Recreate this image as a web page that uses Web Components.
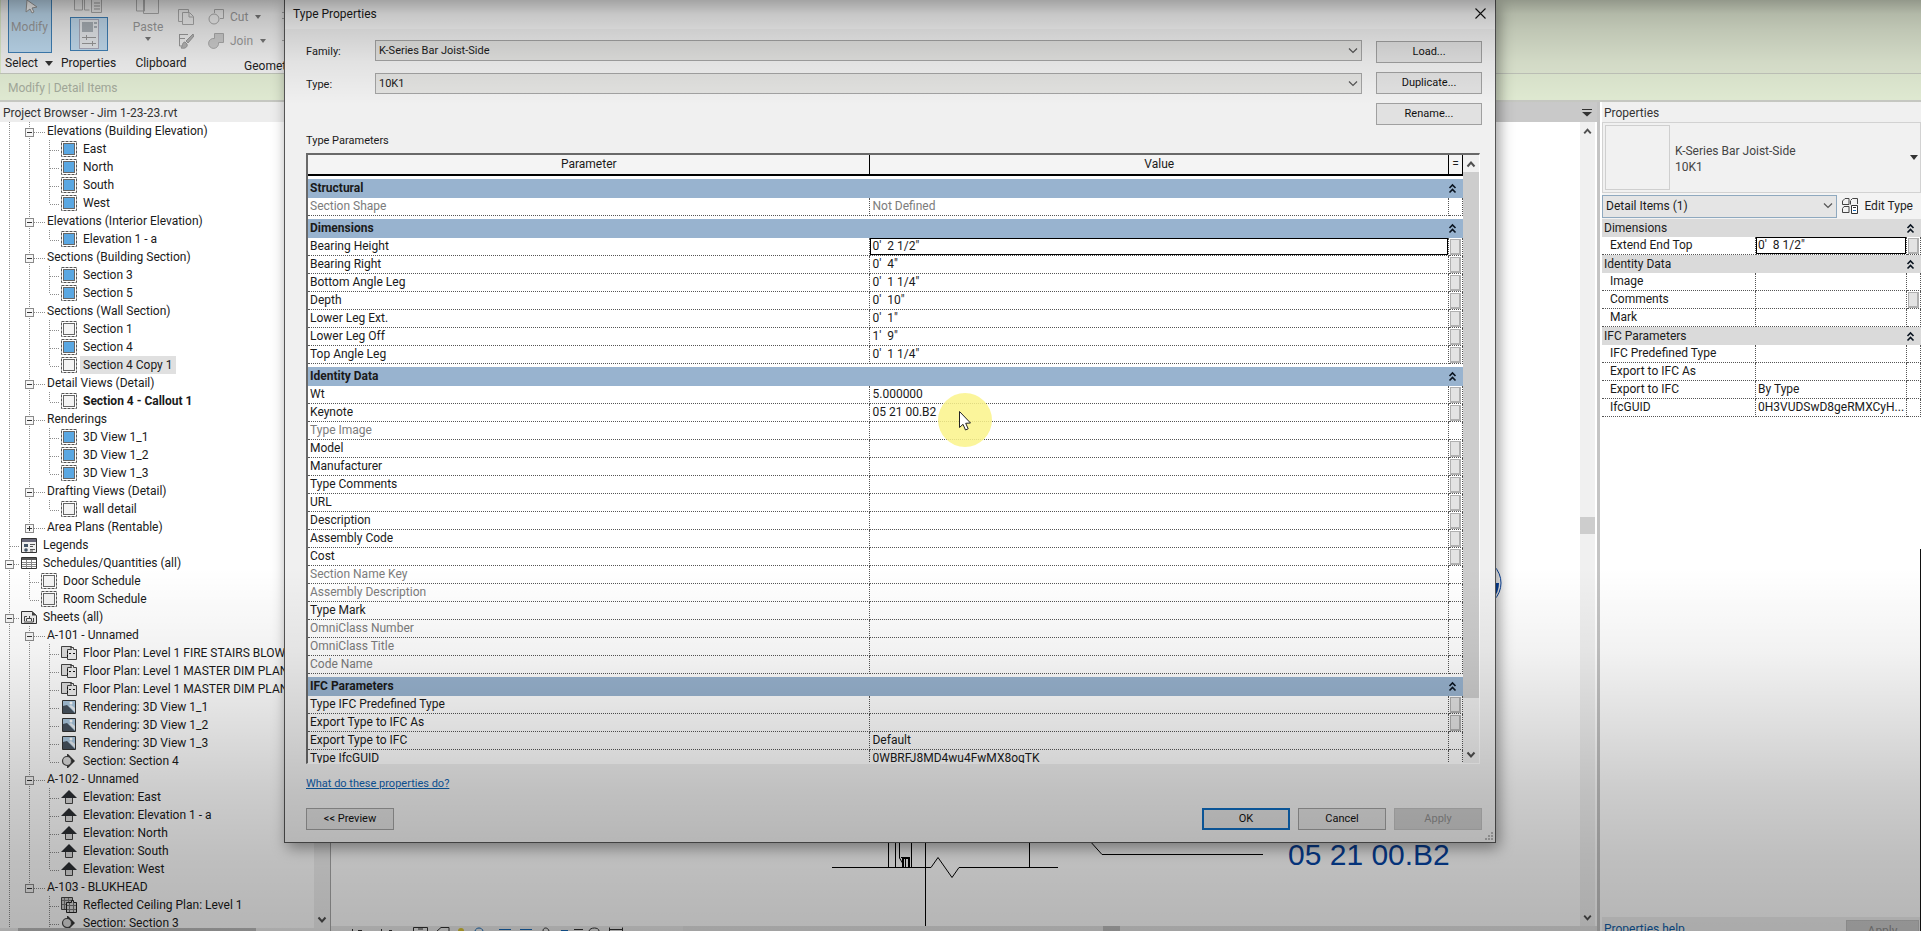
<!DOCTYPE html>
<html lang="en">
<head>
<meta charset="utf-8">
<title>Type Properties</title>
<style>
html,body{margin:0;height:100%;overflow:hidden;background:#fff}
body{font:12px/18px Roboto,"Open Sans",sans-serif;color:#1a1a1a}
</style>
</head>
<body>
<app-window></app-window>
<script>
const define = (name, html, setup) => customElements.define(name, class extends HTMLElement {
  connectedCallback() {
    if (this.shadowRoot) return;
    const t = document.createElement('template');
    t.innerHTML = typeof html === 'function' ? html(this) : html;
    this.attachShadow({mode: 'open'}).append(t.content.cloneNode(true));
    if (setup) setup(this, this.shadowRoot);
  }
});

/* ---------- scroll bar ---------- */
define('scroll-bar', el => `<style>
:host{display:flex;flex-direction:column;background:#f0f0f0;width:16px}
svg{flex:none;width:100%;height:17px;display:block}
.gap{flex:${el.getAttribute('before') || 0} 0 0}
.thumb{flex:${el.getAttribute('thumb') || 0} 0 0;background:#cdcdcd}
.rest{flex:${el.getAttribute('after') || 1} 0 0}
path{fill:none;stroke:#505050;stroke-width:2}
</style>
${el.hasAttribute('no-up') ? '' : '<svg viewBox="0 0 16 17"><path d="M4.500 11.500 8 7.500l3.500 4"/></svg>'}
<div class="gap"></div><div class="thumb"></div><div class="rest"></div>
<svg viewBox="0 0 16 17"><path d="M4.500 6.500 8 10.500l3.500-4"/></svg>`);

/* ---------- drop-down ---------- */
define('drop-down', el => `<style>
:host{display:flex;position:relative}
select{appearance:none;flex:1;min-width:0;height:100%;box-sizing:border-box;border:1px solid var(--edge,#a3a3a3);border-radius:0;background:var(--fill,#e2e2e0);padding:0 3px;margin:0;font:inherit;color:#1a1a1a;outline:0}
svg{position:absolute;right:4px;top:50%;margin-top:-4px;width:10px;height:8px;pointer-events:none}
</style><select aria-label="${el.getAttribute('label')}"><option>${el.getAttribute('value')}</option></select>
<svg viewBox="0 0 10 8"><path d="M1 1.500 5 5.500 9 1.500" fill="none" stroke="#555" stroke-width="1.200"/></svg>`);

/* ---------- push button ---------- */
define('push-button', el => `<style>
:host{display:block;width:88px;height:22px;flex:none}
button{width:100%;height:100%;box-sizing:border-box;padding:0;border:1px solid #a0a0a0;border-radius:0;background:#e1e1e1;font:inherit;color:#111}
:host([primary]) button{border:2px solid #0e6cc0}
button:disabled{background:#cdcdcd;border-color:#c0c0c0;color:#8f8f8f}
</style><button type="button"${el.hasAttribute('off') ? ' disabled' : ''}><slot></slot></button>`);

/* ---------- parameter table ---------- */
const chevrons = '<svg width="9" height="11" viewBox="0 0 9 11"><path d="M1.500 5 4.500 2l3 3M1.500 9.500l3-3 3 3" fill="none" stroke="#0a1420" stroke-width="1.600"/></svg>';
const tables = {
  type: {head: true, groups: [
    ['Structural', [['Section Shape', 'Not Defined', 'd']]],
    ['Dimensions', [['Bearing Height', `0'  2 1/2"`, 'sb'], ['Bearing Right', `0'  4"`, 'b'], ['Bottom Angle Leg', `0'  1 1/4"`, 'b'],
      ['Depth', `0'  10"`, 'b'], ['Lower Leg Ext.', `0'  1"`, 'b'], ['Lower Leg Off', `1'  9"`, 'b'], ['Top Angle Leg', `0'  1 1/4"`, 'b']]],
    ['Identity Data', [['Wt', '5.000000', 'b'], ['Keynote', '05 21 00.B2', 'b'], ['Type Image', '', 'd'], ['Model', '', 'b'], ['Manufacturer', '', 'b'],
      ['Type Comments', '', 'b'], ['URL', '', 'b'], ['Description', '', 'b'], ['Assembly Code', '', 'b'], ['Cost', '', 'b'], ['Section Name Key', '', 'd'],
      ['Assembly Description', '', 'd'], ['Type Mark', '', ''], ['OmniClass Number', '', 'd'], ['OmniClass Title', '', 'd'], ['Code Name', '', 'd']]],
    ['IFC Parameters', [['Type IFC Predefined Type', '', 'b'], ['Export Type to IFC As', '', 'b'], ['Export Type to IFC', 'Default', ''], ['Type IfcGUID', '0WBRFJ8MD4wu4FwMX8oqTK', '']]]
  ]},
  instance: {groups: [
    ['Dimensions', [['Extend End Top', `0'  8 1/2"`, 'sb']]],
    ['Identity Data', [['Image', '', ''], ['Comments', '', 'b'], ['Mark', '', '']]],
    ['IFC Parameters', [['IFC Predefined Type', '', ''], ['Export to IFC As', '', ''], ['Export to IFC', 'By Type', ''], ['IfcGUID', '0H3VUDSwD8geRMXCyH...', '']]]
  ]}
};
define('param-table', el => {
  const t = tables[el.getAttribute('data')];
  const esc = s => s.replace(/"/g, '&quot;');
  return `<style>
:host{display:block;min-width:0}
table{width:100%;border-collapse:separate;border-spacing:0;table-layout:fixed;background:#fff}
.name{width:var(--name,48.7%)}.more{width:var(--more,14px)}
thead th{height:19px;padding:0;font-weight:400;background:#f4f4f4;border-right:1px solid #000;border-bottom:2px solid #000;line-height:19px}
.group th{height:var(--group,19px);line-height:var(--group,19px);padding:0 0 0 2px;text-align:left;font-weight:var(--weight,700);background:var(--band,#98b3cf);background-clip:padding-box;border-top:var(--gap,3px) solid #fff}
.group div{display:flex;justify-content:space-between;align-items:center;padding-right:6px}
td,.row th{height:17px;line-height:17px;padding:0 0 0 2px;text-align:left;font-weight:400;border-bottom:1px dotted #555;border-right:1px dotted #555;white-space:pre;overflow:hidden}
.row th{padding-left:var(--inset,2px)}
.off th,.off td{color:#7c7c7c}
td.pick{padding:0}
input{display:block;width:100%;height:17px;box-sizing:border-box;border:1px solid #000;border-radius:0;padding:0 1px;margin:0;font:inherit;color:inherit;outline:0;background:#fff}
td.end{padding:0 0 0 1px}
td button{display:block;width:11px;height:16px;padding:0;border:1px solid #b0b0b0;border-right-width:2px;border-bottom-width:2px;border-radius:0;background:#e3e3e3}
</style><table><colgroup><col class="name"><col><col class="more"></colgroup>
${t.head ? '<thead><tr><th>Parameter</th><th>Value</th><th>=</th></tr></thead>' : ''}<tbody>
${t.groups.map(([g, rows]) => `<tr class="group"><th colspan="3"><div>${g}${chevrons}</div></th></tr>` + rows.map(([n, v, f]) =>
  `<tr class="row${f.includes('d') ? ' off' : ''}"><th scope="row">${n}</th>${f.includes('s') ? `<td class="pick"><input aria-label="${n}" value="${esc(v)}"></td>` : `<td>${v}</td>`}<td class="end">${f.includes('b') ? `<button type="button" aria-label="Associate ${n}"></button>` : ''}</td></tr>`).join('')).join('')}
</tbody></table>`;
});

/* ---------- project tree ---------- */
const icons = {
  view: f => `<rect x=".5" y=".5" width="15" height="15" fill="#fff" stroke="#555" stroke-dasharray="3 1"/><rect x="2.500" y="2.500" width="11" height="11" fill="${f}" stroke="#666"/>`,
  legend: '<path d="M.5 1.500h15v14H.5z" fill="#eee" stroke="#333"/><path d="M1 2h14v3H1z" fill="#667"/><path d="M3 7h4v3H3z" fill="#456"/><circle cx="5" cy="13" r="1.800" fill="#456"/><path d="M9 7.500h5M9 9.500h3M9 12.500h5M9 14h3" stroke="#555"/>',
  schedule: '<path d="M.5 2.500h15v11H.5z" fill="#fff" stroke="#333"/><path d="M1 3h14v2H1z" fill="#555"/><path d="M1 7.500h14M1 9.500h14M1 11.500h14M5.500 5v8M10.500 5v8" stroke="#888"/>',
  sheet: '<path d="M.5 2.500H11l4.500 4v8H.5z" fill="#eee" stroke="#333"/><path d="M11 2.500v4h4.500z" fill="#444"/><path d="M3.500 12V7.500H6M5.500 12V9.500h5V12M8.500 7v2.500M12.500 9v4H3" fill="none" stroke="#444"/>',
  floor: '<path d="M.5 1.500h10v11H.5z" fill="#ddd" stroke="#444"/><path d="M6.500 4.500h4l-1-2h3v2h3v10h-9z" fill="#eee" stroke="#444"/><path d="M6.500 6v2m0 2v2M8 8.500h2m2 0h2" stroke="#111"/>',
  render: '<path d="M1.500 1.500h13v13h-13z" fill="#a9c6de" stroke="#333"/><path d="M2 7l4-1 8 8H2z" fill="#46525f"/><path d="M8 7l6 6V9L10 6z" fill="#e8edf2"/><circle cx="10" cy="4" r="1.500" fill="#fff"/>',
  section: '<path d="M7 1l7 7-7 7z" fill="#333"/><circle cx="6" cy="8" r="4.500" fill="#ddd" stroke="#444" stroke-width="1.200"/><path d="M6.500 1v3M6.500 12v3" stroke="#444"/>',
  elevation: '<path d="M4.500 8h7v6.500h-7z" fill="#ddd" stroke="#444"/><path d="M8 1 0 9h16z" fill="#2c2f33"/>',
  ceiling: '<path d="M.5.5h11v12H.5z" fill="#ccc" stroke="#444"/><path d="M3.500 1v11M7.500 1v11M1 3.500h10M1 7.500h10" stroke="#777"/><path d="M5.500 5.500h5V3.500h2v2h3v10h-10z" fill="#ddd" stroke="#222"/><path d="M8.500 6v9M12.500 6v9M6 8.500h9M6 12.500h9" stroke="#777"/>'
};
icons.blue = icons.view('#5aa7e2'); icons.blank = icons.view('#f4f4f4');
/* guides: | line, T branch, L last branch, B open box, P closed last box, E last open box */
const rows = [
  ['|B', '', 'Elevations (Building Elevation)'], ['||T', 'blue', 'East'], ['||T', 'blue', 'North'], ['||T', 'blue', 'South'], ['||L', 'blue', 'West'],
  ['|B', '', 'Elevations (Interior Elevation)'], ['||L', 'blue', 'Elevation 1 - a'],
  ['|B', '', 'Sections (Building Section)'], ['||T', 'blue', 'Section 3'], ['||L', 'blue', 'Section 5'],
  ['|B', '', 'Sections (Wall Section)'], ['||T', 'blank', 'Section 1'], ['||T', 'blue', 'Section 4'], ['||L', 'blank', 'Section 4 Copy 1', 'picked'],
  ['|B', '', 'Detail Views (Detail)'], ['||L', 'blank', 'Section 4 - Callout 1', 'open'],
  ['|B', '', 'Renderings'], ['||T', 'blue', '3D View 1_1'], ['||T', 'blue', '3D View 1_2'], ['||L', 'blue', '3D View 1_3'],
  ['|B', '', 'Drafting Views (Detail)'], ['||L', 'blank', 'wall detail'], ['|P', '', 'Area Plans (Rentable)'],
  ['T', 'legend', 'Legends'], ['B', 'schedule', 'Schedules/Quantities (all)'], ['|T', 'blank', 'Door Schedule'], ['|L', 'blank', 'Room Schedule'],
  ['B', 'sheet', 'Sheets (all)'], ['|B', '', 'A-101 - Unnamed'],
  ['||T', 'floor', 'Floor Plan: Level 1 FIRE STAIRS BLOWUP'], ['||T', 'floor', 'Floor Plan: Level 1 MASTER DIM PLAN'], ['||T', 'floor', 'Floor Plan: Level 1 MASTER DIM PLAN'],
  ['||T', 'render', 'Rendering: 3D View 1_1'], ['||T', 'render', 'Rendering: 3D View 1_2'], ['||T', 'render', 'Rendering: 3D View 1_3'], ['||L', 'section', 'Section: Section 4'],
  ['|B', '', 'A-102 - Unnamed'], ['||T', 'elevation', 'Elevation: East'], ['||T', 'elevation', 'Elevation: Elevation 1 - a'], ['||T', 'elevation', 'Elevation: North'],
  ['||T', 'elevation', 'Elevation: South'], ['||L', 'elevation', 'Elevation: West'],
  ['|E', '', 'A-103 - BLUKHEAD'], ['| T', 'ceiling', 'Reflected Ceiling Plan: Level 1'], ['| T', 'section', 'Section: Section 3']
];
const guide = (c, wide) => {
  let s = '';
  if ('|TBLPE'.includes(c)) s += `<path d="M9.500 0V${'LPE'.includes(c) ? 10 : 18}"/>`;
  if ('TLBPE'.includes(c)) s += `<path d="M10 10.500H${wide ? 25 : 20}"/>`;
  if ('BPE'.includes(c)) s += `<rect x="5.500" y="6.500" width="8" height="8"/><path class="s" d="M7 10.500h5${c === 'P' ? 'M9.500 8v5' : ''}"/>`;
  return `<svg class="g" width="20" height="18">${s}</svg>`;
};
define('tree-row', el => {
  const [g, icon, text, state] = rows[el.getAttribute('row')];
  return `<style>
:host{display:flex;height:18px;flex:none;white-space:nowrap;align-items:center}
.g{flex:none;overflow:visible}
.g path{fill:none;stroke:#8c8c8c;stroke-dasharray:1 1}.g rect{fill:#f6f6f6;stroke:#8a8a8a}.g path.s{stroke:#333;stroke-dasharray:none}
.i{flex:none;margin:0 3px 0 1px}
span{padding:0 3px}.plain{margin-left:4px}.picked{background:#e0e0e0}.open{font-weight:700}
</style>${[...g].map(c => guide(c, !icon)).join('')}${icon ? `<svg class="i" width="16" height="16" viewBox="0 0 16 16">${icons[icon]}</svg>` : ''}<span class="${icon ? '' : 'plain'} ${state || ''}">${text}</span>`;
});
define('project-browser', () => `<style>
:host{display:flex;flex-direction:column;min-height:0;background:#fff;border-right:1px solid #a9a9a9}
h2{margin:0;font:inherit;height:20px;line-height:22px;padding-left:3px;background:#ededed;color:#333;flex:none}
.body{display:flex;flex:1;min-height:0}
.rows{flex:1;min-width:0;overflow:hidden;display:flex;flex-direction:column}
.track{flex:none;height:3px;background:#eee;padding:0 74px 0 18px}.track div{height:3px;background:#bdbdbd}
</style><h2>Project Browser - Jim 1-23-23.rvt</h2>
<div class="body"><div class="rows">${rows.map((r, i) => `<tree-row row="${i}"></tree-row>`).join('')}</div><scroll-bar></scroll-bar></div>
<div class="track"><div></div></div>`);

/* ---------- ribbon ---------- */
define('app-ribbon', () => `<style>
:host{display:block}
.tools{display:flex;height:73px;border-bottom:1px solid #c2c6bc;background:#dfe7d2;box-sizing:content-box}
.left{display:flex;width:331px;background:#f0f0f0;border-left:1px solid #dbe8c8;box-sizing:border-box;overflow:hidden}
section{display:flex;flex-direction:column;justify-content:space-between;align-items:center;flex:none;white-space:nowrap}
footer{height:20px;line-height:20px;color:#222}
button{font:inherit;padding:0;border:0;background:none;color:#9a9a9a;display:flex;flex-direction:column;align-items:center}
.big{width:44px;height:53px;border:1px solid #3f7fb5;border-top:0;background:#bdd9ee}
.prop{width:38px;height:34px;border:1px solid #3f7fb5;background:#c3dcef;justify-content:center}
.s{width:57px}.p{width:61px}.c{width:84px}
.c button{margin-right:26px}
.g{margin-left:-25px;align-items:flex-start}
.g footer{padding-left:66px}
.row{display:flex;gap:14px;padding-top:8px}
.row button{flex-direction:row;gap:6px;height:18px}
.stack{display:flex;flex-direction:column;gap:6px}
.bar{height:26px;line-height:29px;padding-left:8px;background:#e0ead2;color:#a3a99b;border-bottom:2px solid #c6c8c2}
svg{display:block;flex:none}
footer svg{display:inline;margin-left:4px}
</style>
<div class="tools"><div class="left">
<section class="s"><button class="big" type="button"><svg width="20" height="18"><path d="M7 0l10 7-5 1 2 4-2 1-2-4-4 3z" fill="#fff" stroke="#999"/></svg>Modify</button><footer>Select <svg width="9" height="6"><path d="M0 0h8L4 5z" fill="#333"/></svg></footer></section>
<section class="p"><button type="button" aria-label="Type properties"><svg width="32" height="14"><path d="M1.500 0v10h8V0M11.500 0v10h5M18.500 0v12.500h10V0" fill="#eee" stroke="#aaa"/><path d="M21 3h6M21 6h6M21 9h6" stroke="#999"/></svg></button>
<button class="prop" type="button" aria-label="Properties"><svg width="22" height="32"><rect x="1.500" y="1.500" width="19" height="29" fill="#e6e9ec" stroke="#aab"/><path d="M4 4h11v10H4z" fill="#a9b0b6"/><path d="M16 4h3v2h-3zm0 4h3v2h-3z" fill="#a9b0b6"/><path d="M4 19.500h14M4 25.500h14M8.500 17v5M14.500 23v5" stroke="#999"/></svg></button><footer>Properties</footer></section>
<section class="c"><button type="button"><svg width="28" height="18"><path d="M2.500 0v11h8V0M9.500 0v13.500h15V0" fill="#eee" stroke="#aaa"/></svg>Paste<svg width="8" height="6"><path d="M1 1h6L4 5z" fill="#777"/></svg></button><footer>Clipboard</footer></section>
<section class="g"><div class="row"><div class="stack">
<button type="button" aria-label="Copy"><svg width="16" height="16"><path d="M10.500 3V.5H.5v12H4M4.500 3.500h7l4 4v8h-11zM11 4v4h4" fill="none" stroke="#aaa"/></svg></button>
<button type="button" aria-label="Match type"><svg width="16" height="16"><path d="M1 1.500h9M1 5.500h6M1.500 2v11h4" fill="none" stroke="#999"/><path d="M15 1 8 8l2 2 6-7zM7 9c-3 0-2 4-4 6 4 1 7-1 6-4z" fill="#b5b5b5" stroke="#999"/></svg></button></div>
<div class="stack">
<button type="button"><svg width="16" height="16"><path d="M6.500 4V.5h9v9H12" fill="none" stroke="#aaa"/><circle cx="6" cy="10" r="5" fill="none" stroke="#aaa"/></svg>Cut<svg width="8" height="6"><path d="M1 1h6L4 5z" fill="#777"/></svg></button>
<button type="button"><svg width="16" height="16"><path d="M6.500.5h9v9h-5a5 5 0 1 1-4-4z" fill="#ccc" stroke="#aaa"/></svg>Join<svg width="8" height="6"><path d="M1 1h6L4 5z" fill="#777"/></svg></button></div>
<svg width="16" height="48"><path d="M3.500 1v14M1 4.500h14M1 10.500h14M3.500 29v15M1 32.500h14M7 36h8v6H7z" fill="none" stroke="#aaa"/></svg></div><footer>Geometry</footer></section>
</div></div>
<div class="bar">Modify | Detail Items</div>`);

/* ---------- drawing view ---------- */
define('drawing-view', () => `<style>
:host{display:flex;flex-direction:column;min-width:0;min-height:0;background:#fff;border-right:3px solid #c4c4c4}
.tabs{flex:none;height:20px;background:#c9c9c9;display:flex;justify-content:flex-end;align-items:center;padding-right:5px}
.body{flex:1;display:flex;min-height:0}
.canvas{flex:1;min-width:0;height:100%;overflow:hidden;display:block}
scroll-bar{width:15px;margin-right:2px}
.status{flex:none;height:5px;background:#eaeaea;display:flex;align-items:stretch}
.status svg{flex:none;margin-left:12px}
.track{flex:1;background:#e4e4e4;display:flex}.track div{width:17px;margin-left:46%;background:#bdbdbd}
text{font:30px "Liberation Sans",sans-serif;fill:#0745a5}
</style>
<div class="tabs"><svg width="10" height="9"><path d="M0 1.500h10" stroke="#333"/><path d="M0 4h10L5 8.500z" fill="#333"/></svg></div>
<div class="body"><svg class="canvas">
<g fill="none" stroke="#000"><path d="M594.500 700V804M501 745.500h99l7-10 14 20 7-10h99M698.500 700v45" /><path d="M758 718l13 14.500h161"/>
<path d="M557.500 700v45M564.500 700v45M568.500 700v36l3 5v4M580.500 700v45M576 700l4 15M571.500 736v9M574.500 736v9M577.500 736v9M570 735.500h9"/><path stroke-width="2" d="M572 737v8M578 737v8M571 736h8"/></g>
<text x="957" y="743">05 21 00.B2</text>
<circle cx="1146" cy="461" r="24" fill="#fff" stroke="#0745a5"/><path d="M1146 461h22a24 24 0 0 1-22 24z" fill="#0745a5"/>
</svg><scroll-bar before="378" thumb="17" after="376"></scroll-bar></div>
<div class="status"><svg width="340" height="5"><g fill="none" stroke="#333"><path d="M9.500 3v2M15 4.500h4M38.500 3v2M46 4.500h3M70.500 5V1.500h14V5M75 3h5M94 5l4-3.500h8V5M231 3.500h9M246 5c1-4 10-4 10 0M266.500 5V1.500M279.500 5V1.500M266 3.500h14"/><path d="M132 5c1-4 7-4 8 0M156 3.500h12M177 3.500h12M218 4.500h7" stroke="#1668b5"/><path d="M200 5c0-4 5-4 6 0"/></g><circle cx="118" cy="5" r="3" fill="#d9c437"/></svg><div class="track"><div></div></div></div>`);

/* ---------- properties palette ---------- */
define('properties-palette', () => `<style>
:host{display:flex;flex-direction:column;min-height:0;background:#fff;overflow:hidden;padding-left:2px}
h2{margin:0;font:inherit;height:20px;line-height:22px;padding-left:2px;background:#f0f0f0;color:#333;flex:none}
.type{display:flex;height:69px;flex:none;border:1px solid #d2d2d2;background:#f1f1f1;align-items:center;padding:0 2px;color:#444;line-height:16px}
.thumb{width:65px;height:65px;border:1px solid #cfcfcf;box-sizing:border-box;margin-right:5px}
.type p{margin:0;flex:1;padding-top:2px}
.edit{display:flex;height:26px;flex:none;background:#f3f3f3;align-items:center;gap:5px;padding-right:8px}
drop-down{flex:1;height:23px;--edge:#8fa9bf;--fill:#e5e5e5}
.edit button{display:flex;align-items:center;gap:6px;border:0;background:none;padding:0;font:inherit;color:#222}
param-table{--name:154px;--more:14px;--group:18px;--gap:0px;--band:#dadada;--weight:400;--inset:8px}
.fill{flex:1}
footer{flex:none;height:14px;background:#f0f0f0;display:flex;justify-content:space-between;align-items:flex-start;padding-right:2px;overflow:hidden}
a{color:#0f5ea8;line-height:24px;padding-left:2px}
push-button{width:73px;margin-top:3px}
</style><h2>Properties</h2>
<div class="type"><div class="thumb"></div><p>K-Series Bar Joist-Side<br>10K1</p><svg width="8" height="5"><path d="M0 0h8L4 5z" fill="#333"/></svg></div>
<div class="edit"><drop-down label="Filter" value="Detail Items (1)"></drop-down><button type="button"><svg width="16" height="16"><path d="M.5 3 3 .5h4v6H.5zM8.500 2.500l2-2h5V6M.5 10.500 2 8.500h5v6H.5zM8.500 6.500V3" fill="none" stroke="#444"/><path d="M9.500 7.500h6v8h-6z" fill="#fff" stroke="#333"/><path d="M11 9.500h3" stroke="#333"/><path d="M11 12.500h3" stroke="#1668b5"/></svg>Edit Type</button></div>
<param-table data="instance"></param-table><div class="fill"></div>
<footer><a href="#help">Properties help</a><push-button off>Apply</push-button></footer>`);

/* ---------- type properties dialog ---------- */
define('type-dialog', () => `<style>
:host{display:block;background:#f0f0f0;border:1px solid #555;border-top:0;box-shadow:3px 5px 14px rgba(0,0,0,.4);font-size:11px}
header{height:27px;padding-bottom:2px;background:#f8f8f8;display:flex;justify-content:space-between;align-items:center;padding-left:8px;padding-right:9px;font-size:12px}
header button{border:0;background:none;padding:0;display:flex}
.content{padding:11px 13px 12px 21px}
.form{display:flex;gap:14px}
.fields{flex:1;display:flex;flex-direction:column;gap:12px}
.field{display:flex;height:21px;align-items:center}
.field span{width:69px;line-height:20px;padding-top:2px;box-sizing:border-box}
.field drop-down{flex:1;height:21px}
.actions{display:flex;flex-direction:column;gap:9px;padding-top:1px}
.actions push-button{width:106px}
h3{font:inherit;line-height:16px;margin:8px 0 4px}
.grid{display:flex;height:608px;overflow:hidden;margin-right:2px;border:2px solid #696969;border-right:1px solid #fff;border-bottom:1px solid #fff;font-size:12px;background:#fff}
param-table{flex:1}
.help{margin:12px 0 16px;line-height:16px}
a{color:#0f62b0}
footer{display:flex;gap:8px}
.spacer{flex:1}
.grip{position:absolute;right:1px;bottom:1px}
</style>
<header>Type Properties<button type="button" aria-label="Close"><svg width="11" height="11"><path d="M.5.5l10 10M10.500.5l-10 10" stroke="#111" stroke-width="1.100"/></svg></button></header>
<div class="content">
<div class="form"><div class="fields"><div class="field"><span>Family:</span><drop-down label="Family" value="K-Series Bar Joist-Side"></drop-down></div>
<div class="field"><span>Type:</span><drop-down label="Type" value="10K1"></drop-down></div></div>
<div class="actions"><push-button>Load...</push-button><push-button>Duplicate...</push-button><push-button>Rename...</push-button></div></div>
<h3>Type Parameters</h3>
<div class="grid"><param-table data="type"></param-table><scroll-bar before="0" thumb="526" after="48"></scroll-bar></div>
<div class="help"><a href="#properties">What do these properties do?</a></div>
<footer><push-button>&lt;&lt; Preview</push-button><div class="spacer"></div><push-button primary>OK</push-button><push-button>Cancel</push-button><push-button off>Apply</push-button></footer>
</div>
<svg class="grip" width="10" height="10"><path d="M7 1h2v2H7zM4 4h2v2H4zm3 0h2v2H7zM1 7h2v2H1zm3 0h2v2H4zm3 0h2v2H7z" fill="#b5b5b5"/></svg>`);

/* ---------- pointer with click halo ---------- */
define('mouse-pointer', () => `<style>:host{display:block;width:54px;height:54px;pointer-events:none}svg{display:block}</style>
<svg width="54" height="54"><circle cx="27" cy="27" r="27" fill="#faf38a" opacity=".85"/><path d="M21.500 18.500v16l3.500-3.200 2.500 5.700 2.700-1.200-2.500-5.500 4.800-.3z" fill="#fff" stroke="#222"/></svg>`);

/* ---------- window ---------- */
define('app-window', () => `<style>
:host{display:flex;flex-direction:column;height:100vh;position:relative;overflow:hidden;background:#fff}
app-ribbon{flex:none}
.main{flex:1;min-height:0;display:grid;grid-template-columns:331px minmax(0,1fr) 321px;grid-template-rows:minmax(0,1fr)}
project-browser,properties-palette{box-sizing:border-box}
type-dialog{position:absolute;left:284px;right:425px;top:0}
mouse-pointer{position:absolute;left:938px;top:393px}
.shade{position:absolute;inset:0;pointer-events:none;background:
linear-gradient(rgba(0,0,0,.34) 0,rgba(0,0,0,.2) 14px,rgba(0,0,0,.14) 30px,rgba(0,0,0,.06) 62px,transparent 105px),
linear-gradient(transparent 61%,rgba(0,0,0,.05) 70%,rgba(0,0,0,.13) 78%,rgba(0,0,0,.2) 85%,rgba(0,0,0,.25) 92%,rgba(0,0,0,.29) 100%)}
.edge{position:absolute;right:0;top:59%;bottom:0;width:1px;background:#111}
</style><app-ribbon></app-ribbon>
<div class="main"><project-browser></project-browser><drawing-view></drawing-view><properties-palette></properties-palette></div>
<type-dialog></type-dialog><mouse-pointer></mouse-pointer><div class="shade"></div><div class="edge"></div>`);
</script>
</body>
</html>
